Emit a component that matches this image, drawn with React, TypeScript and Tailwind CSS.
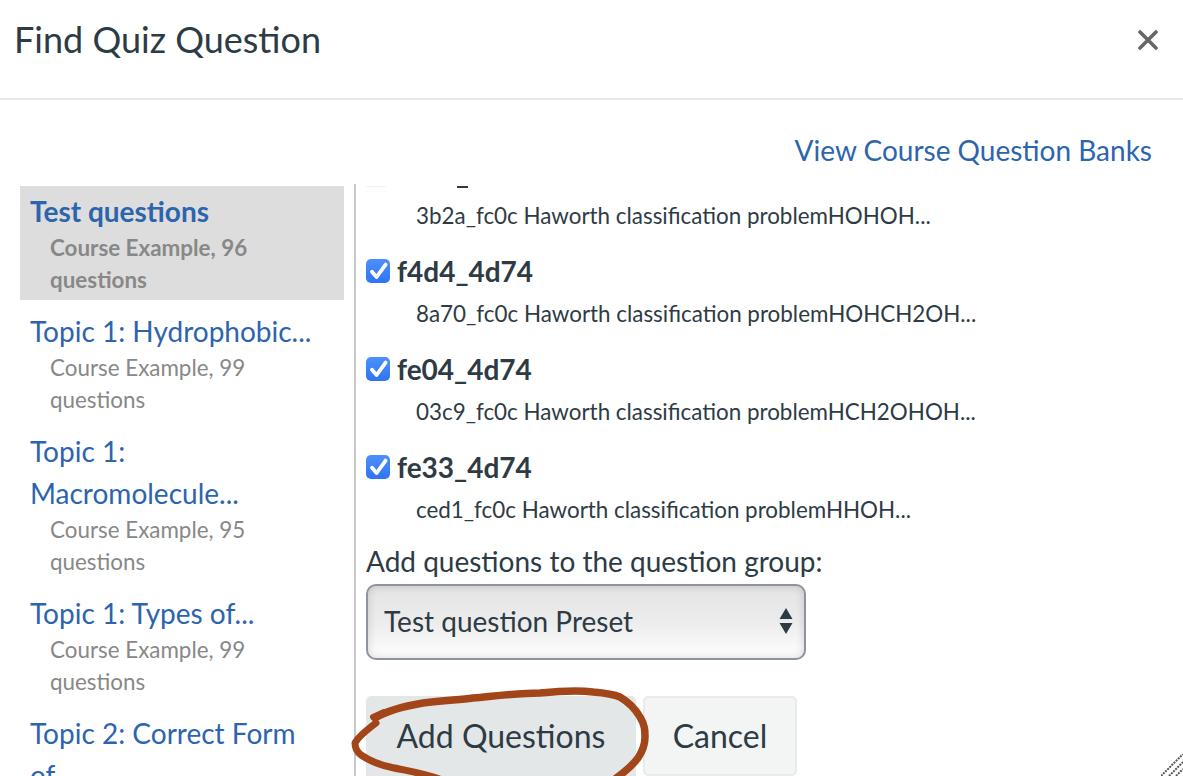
const banks = [
  { title: ["Test questions"], count: 96, active: true },
  { title: ["Topic 1: Hydrophobic..."], count: 99 },
  { title: ["Topic 1:", "Macromolecule..."], count: 95 },
  { title: ["Topic 1: Types of..."], count: 99 },
];

const questions = [
  { name: "f4d4_4d74", text: "8a70_fc0c Haworth classification problemHOHCH2OH..." },
  { name: "fe04_4d74", text: "03c9_fc0c Haworth classification problemHCH2OHOH..." },
  { name: "fe33_4d74", text: "ced1_fc0c Haworth classification problemHHOH..." },
];

function Check() {
  return (
    <span className="grid h-6 w-6 place-items-center rounded-[5px] bg-gradient-to-b from-[#4d90fb] to-[#2f74f2]">
      <svg viewBox="0 0 24 24" className="h-6 w-6" fill="none" stroke="white" strokeWidth="3.8" strokeLinecap="round" strokeLinejoin="round">
        <path d="M6 12.7 10.6 18 19.6 5.6" />
      </svg>
    </span>
  );
}

export default function App() {
  return (
    <div className="relative h-[776px] w-[1183px] overflow-hidden bg-white font-['Lato',sans-serif] text-[#2d3b45]">
      <header className="flex h-[100px] items-start justify-between border-b-2 border-[#e8e8e8] pl-[14px] pr-[25px]">
        <h1 className="mt-[14px] text-[36px] leading-[50px]">Find Quiz Question</h1>
        <svg viewBox="0 0 20 20" className="mt-[30px] h-[20px] w-[20px]" stroke="#666" strokeWidth="3.6" strokeLinecap="round">
          <path d="M2 2 18 18M18 2 2 18" />
        </svg>
      </header>

      <div className="flex justify-end pr-[31px] pt-[31px]">
        <a className="text-[28px] leading-[38px] text-[#2d64ae]">View Course Question Banks</a>
      </div>

      <div className="mt-[17px] flex h-[592px] pl-[20px]">
        <aside className="w-[324px] shrink-0">
          {banks.map((bank) => (
            <div key={bank.title[0]} className={`mb-[6px] pb-[4px] pl-[10px] pt-[4px] ${bank.active ? "bg-[#dddddd]" : ""}`}>
              <div className={`text-[28px] leading-[42px] text-[#2d64ae] ${bank.active ? "font-bold" : ""}`}>
                {bank.title.map((line) => (
                  <div key={line}>{line}</div>
                ))}
              </div>
              <div className={`pl-[20px] text-[22.4px] leading-[32px] text-[#888888] ${bank.active ? "font-bold" : ""}`}>
                Course Example, {bank.count}
                <br />
                questions
              </div>
            </div>
          ))}
          <div className="pl-[10px] pt-[4px] text-[28px] leading-[42px] text-[#2d64ae]">
            Topic 2: Correct Form
            <br />
            of
          </div>
        </aside>

        <div className="ml-[10px] -mt-[2px] w-[2px] shrink-0 bg-[#c8c8c8]" />

        <section className="min-w-0 flex-1 overflow-hidden pl-[10px]">
          <div className="h-[64px]">
            {/* bottom edge of the question scrolled out of view */}
            <div className="flex h-[2px] items-start">
              <span className="h-[1px] w-[20px] bg-[#f1f0fb]" />
              <span className="ml-[71px] h-[2px] w-[11px] bg-[#2d3b45]" />
            </div>
            <p className="pl-[50px] pt-[13px] text-[22.4px] leading-[30px]">3b2a_fc0c Haworth classification problemHOHOH...</p>
          </div>

          {questions.map((q) => (
            <div key={q.name} className="h-[98px]">
              <label className="flex h-[42px] items-center gap-[7px]">
                <Check />
                <span className="text-[28px] font-bold">{q.name}</span>
              </label>
              <p className="pl-[50px] pt-[7px] text-[22.4px] leading-[30px]">{q.text}</p>
            </div>
          ))}

          <div className="-mt-[4px] text-[28px] leading-[42px]">Add questions to the question group:</div>
          <div className="mt-[2px] flex h-[76px] w-[440px] items-center justify-between rounded-[10px] border-[2px] border-[#8d939f] bg-gradient-to-b from-[#e4e4e4] via-[#ececec] to-white pb-[2px] pl-[16px] pr-[11px] shadow-[inset_0_0_8px_rgba(0,0,0,0.16)]">
            <span className="text-[28px]">Test question Preset</span>
            <svg viewBox="0 0 14 26" className="h-[26px] w-[14px]" fill="#2d3b45">
              <path d="M7 0 13.5 11H.5ZM.5 15h13L7 26Z" />
            </svg>
          </div>
          <div className="mt-[36px] flex gap-[7px]">
            <button className="h-[90px] w-[270px] rounded-[5px] bg-[#e4e7e8] pb-[10px] text-[32px]">Add Questions</button>
            <button className="h-[80px] w-[154px] rounded-[5px] border-2 border-[#e9ebeb] bg-[#f3f4f4] text-[32px]">Cancel</button>
          </div>
        </section>
      </div>

      {/* pen annotation around the button */}
      <svg viewBox="0 0 1183 776" className="pointer-events-none absolute inset-0 h-[776px] w-[1183px]" fill="none" stroke="#a2461a" strokeLinecap="round" strokeLinejoin="round">
        <path strokeWidth="7.5" d="M375 718C388 710 405 706 423 703 445 700 460 700 473 698 495 696 518 693 540 693 560 691 578 690 593 692 605 693 613 694 620 697 630 703 636 710 640 717 645 725 645 731 645 737 645 745 642 752 638 758 632 766 626 771 615 779" />
        <path strokeWidth="7" d="M376 723C368 729 358 737 355 743 355 749 357 752 361 755 370 761 380 765 390 767 407 771 424 773 442 780" />
        <path strokeWidth="6" d="M373 717 384 712" />
      </svg>

      {/* textarea style resize grip */}
      <svg viewBox="0 0 22 22" className="absolute bottom-0 right-0 h-[22px] w-[22px]" stroke="#555" strokeWidth="2" strokeDasharray="2 1">
        <path d="M0 22 22 0M8 22 22 8M15 22 22 15" />
      </svg>
    </div>
  );
}
